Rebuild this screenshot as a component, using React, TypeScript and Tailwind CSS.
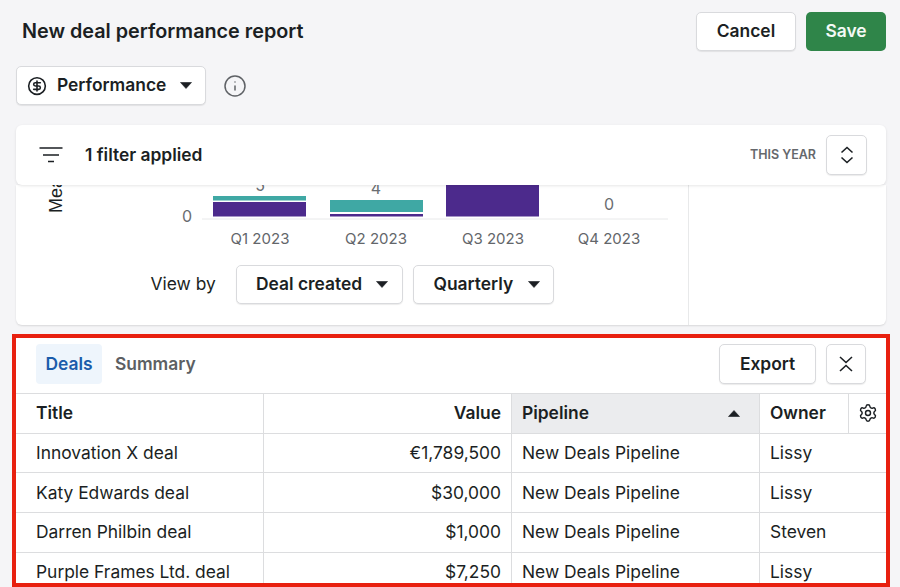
import React from "react";
import { CircleDollarSign, Info, Settings } from "lucide-react";

const Caret = ({ up = false }: { up?: boolean }) => (
  <svg width="12" height="7" viewBox="0 0 12 7" className="shrink-0">
    <path d={up ? "M6 .5 11.5 6.5H.5Z" : "M.5.5h11L6 6.5Z"} fill="#1b1f23" stroke="#1b1f23" strokeWidth="0.6" strokeLinejoin="round" />
  </svg>
);

const btn = "flex items-center justify-center bg-white border border-[#d9dadd] rounded-[5px] shadow-[0_1px_1px_rgba(0,0,0,0.08)] text-[#1b1f23] font-semibold";

const rows = [
  ["Innovation X deal", "€1,789,500", "New Deals Pipeline", "Lissy"],
  ["Katy Edwards deal", "$30,000", "New Deals Pipeline", "Lissy"],
  ["Darren Philbin deal", "$1,000", "New Deals Pipeline", "Steven"],
  ["Purple Frames Ltd. deal", "$7,250", "New Deals Pipeline", "Lissy"],
];

const Chart = () => (
  <svg width="672" height="94" viewBox="16 185 672 94" className="block">
    <g transform="translate(62 213) rotate(-90)">
      <text x="0" y="0" fontFamily="'Liberation Sans', sans-serif" fontSize="18" fill="#1b1f23">Measure</text>
    </g>
    <g fontFamily="Inter, sans-serif" fontSize="16" fill="#6a6d71" textAnchor="middle">
      <text x="187" y="222">0</text>
      <text x="260" y="191">5</text>
      <text x="376" y="194">4</text>
      <text x="609" y="210">0</text>
    </g>
    <line x1="202" x2="668" y1="219" y2="219" stroke="#e8e9ea" strokeWidth="1" />
    <rect x="213" y="196" width="93" height="4.5" fill="#3fa8a4" />
    <rect x="213" y="202" width="93" height="14.5" fill="#4c2a8c" />
    <rect x="330" y="200" width="93" height="12" fill="#3fa8a4" />
    <rect x="330" y="214" width="93" height="2.5" fill="#4c2a8c" />
    <rect x="446" y="185" width="93" height="31.5" fill="#4c2a8c" />
    <g fontFamily="Inter, sans-serif" fontSize="15" fill="#63666a" textAnchor="middle">
      <text x="260" y="244">Q1 2023</text>
      <text x="376" y="244">Q2 2023</text>
      <text x="493" y="244">Q3 2023</text>
      <text x="609" y="244">Q4 2023</text>
    </g>
  </svg>
);

export default function App() {
  return (
    <div className="w-[900px] h-[587px] overflow-hidden bg-[#f5f5f7] font-['Inter',sans-serif] text-[#1b1f23]">
      <div className="flex items-center justify-between pl-[22px] pr-[14px] pt-[11.5px]">
        <h1 className="text-[19.8px] font-semibold leading-[39.5px]">New deal performance report</h1>
        <div className="flex gap-[10px]">
          <div className={`${btn} w-[100px] h-[39.5px] text-[17.4px]`}>Cancel</div>
          <div className="flex items-center justify-center w-[80px] h-[39.5px] rounded-[5px] bg-[#2f8549] text-[#f4f9f5] text-[17.4px] font-semibold">Save</div>
        </div>
      </div>

      <div className="flex items-center pl-[16px] mt-[15px] h-[39px]">
        <div className={`${btn} w-[190px] h-[39px] pl-[10px] pr-[13px] gap-[10px] justify-start`}>
          <CircleDollarSign size={20} strokeWidth={1.9} />
          <span className="text-[17.4px] flex-1">Performance</span>
          <Caret />
        </div>
        <Info size={24} strokeWidth={1.5} className="ml-[17px] text-[#5f6266]" />
      </div>

      <div className="relative z-10 mt-[20px] ml-[16px] mr-[14px] h-[60px] bg-white rounded-md shadow-[0_1px_3px_rgba(0,0,0,0.1)] flex items-center pl-[23px] pr-[19px]">
        <svg width="24" height="18" viewBox="0 0 24 18" className="shrink-0">
          <path d="M.5 2h23M4 9h16M9 15.5h6" stroke="#1b1f23" strokeWidth="1.7" fill="none" />
        </svg>
        <span className="ml-[22px] text-[17.4px] font-semibold flex-1">1 filter applied</span>
        <span className="text-[12.5px] font-semibold text-[#65686c] mr-[10px]">THIS YEAR</span>
        <div className={`${btn} w-[41px] h-[40px]`}>
          <svg width="14" height="18" viewBox="0 0 14 18" fill="none" stroke="#1b1f23" strokeWidth="1.6">
            <path d="M1.5 6.5 7 1.5l5.5 5M1.5 11.5l5.5 5 5.5-5" />
          </svg>
        </div>
      </div>

      <div className="ml-[16px] mr-[14px] h-[140px] bg-white rounded-b-md shadow-[0_1px_2px_rgba(0,0,0,0.12)] flex overflow-hidden">
        <div className="w-[672.5px] border-r border-[#e8e9ea]">
          <Chart />
          <div className="flex items-center mt-[-14px] pl-[134.5px]">
            <span className="text-[17.4px] w-[85px]">View by</span>
            <div className={`${btn} w-[167px] h-[39px] text-[17.4px] gap-[14px] justify-start pl-[19.5px]`}>
              <span>Deal created</span>
              <Caret />
            </div>
            <div className={`${btn} ml-[10px] w-[141px] h-[39px] text-[17.4px] gap-[15px] justify-start pl-[20px]`}>
              <span>Quarterly</span>
              <Caret />
            </div>
          </div>
        </div>
      </div>

      <div className="mt-[8.5px] ml-[12px] mr-[10px] h-[253px] border-[4px] border-[#e8200f] bg-white overflow-hidden">
        <div className="flex items-start justify-between h-[56.5px] pl-[20px] pr-[20px] pt-[6.5px] border-b border-[#dcdddf]">
          <div className="flex items-center h-[40px]">
            <div className="flex items-center justify-center w-[66px] h-[40px] rounded-[4px] bg-[#eef5fc] text-[#1a5cab] text-[17.4px] font-semibold">Deals</div>
            <div className="ml-[13px] text-[#5c5f63] text-[17.4px] font-semibold">Summary</div>
          </div>
          <div className="flex gap-[10px]">
            <div className={`${btn} w-[97px] h-[40px] text-[17.4px]`}>Export</div>
            <div className={`${btn} w-[40px] h-[40px]`}>
              <svg width="14" height="16" viewBox="0 0 14 16" fill="none" stroke="#1b1f23" strokeWidth="1.6">
                <path d="M1 1 7 6.5 13 1M1 15 7 9.5 13 15" />
              </svg>
            </div>
          </div>
        </div>

        <div className="grid grid-cols-[248px_248px_248px_89px_37px] h-[39.5px] text-[17.4px] font-semibold border-b border-[#dcdddf]">
          <div className="flex items-center pl-[20px] border-r border-[#dcdddf]">Title</div>
          <div className="flex items-center justify-end pr-[10px] border-r border-[#dcdddf]">Value</div>
          <div className="flex items-center justify-between pl-[10px] pr-[19px] bg-[#ebecee] border-r border-[#dcdddf]">
            <span>Pipeline</span>
            <Caret up />
          </div>
          <div className="flex items-center pl-[10px] border-r border-[#dcdddf]">Owner</div>
          <div className="flex items-center justify-center"><Settings size={20} strokeWidth={1.7} /></div>
        </div>
        {rows.map((r) => (
          <div key={r[0]} className="grid grid-cols-[248px_248px_248px_122px] h-[39.75px] text-[17.4px] border-b border-[#dcdddf]">
            <div className="flex items-center pl-[20px] border-r border-[#dcdddf] whitespace-nowrap">{r[0]}</div>
            <div className="flex items-center justify-end pr-[10px] border-r border-[#dcdddf]">{r[1]}</div>
            <div className="flex items-center pl-[10px] border-r border-[#dcdddf]">{r[2]}</div>
            <div className="flex items-center pl-[10px]">{r[3]}</div>
          </div>
        ))}
      </div>
    </div>
  );
}
